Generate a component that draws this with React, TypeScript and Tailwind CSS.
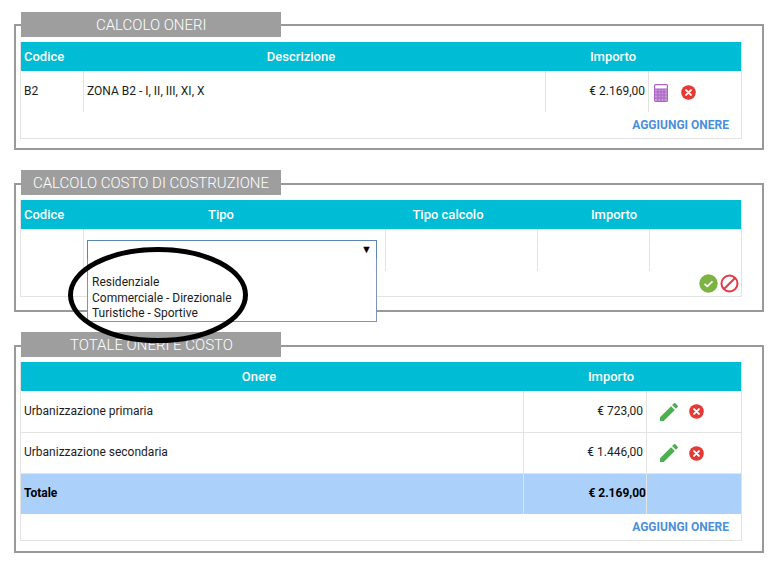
import { MdEdit } from "react-icons/md";

const CloseIcon = () => (
    <svg width="15" height="15" viewBox="0 0 16 16">
        <circle cx="8" cy="8" r="7.8" fill="#e53935" />
        <path d="M5.4 5.4l5.2 5.2M10.6 5.4l-5.2 5.2" stroke="#fff" strokeWidth="2" strokeLinecap="round" />
    </svg>
);

const CalcIcon = () => (
    <svg width="14" height="18" viewBox="0 0 14 18">
        <rect x="0.6" y="0.6" width="12.8" height="16.8" rx="1" fill="#fff" stroke="#ab63c7" strokeWidth="1.2" />
        <rect x="1" y="5" width="12" height="12" fill="#c79ad9" />
        <path d="M1 5h12M1 8h12M1 11h12M1 14h12M4 5v12M7 5v12M10 5v12" stroke="#ab63c7" strokeWidth="1.1" />
    </svg>
);

const CheckIcon = () => (
    <svg width="19" height="19" viewBox="0 0 19 19">
        <circle cx="9.5" cy="9.5" r="9.2" fill="#7cb342" />
        <path d="M5.5 9.8l2.8 2.6 5.2-5" fill="none" stroke="#fff" strokeWidth="1.6" />
    </svg>
);

const BanIcon = () => (
    <svg width="19" height="19" viewBox="0 0 19 19">
        <circle cx="9.5" cy="9.5" r="8" fill="none" stroke="#e53945" strokeWidth="2" />
        <path d="M15 4L4 15" stroke="#e53945" strokeWidth="2" />
    </svg>
);

const Legend = ({ title, className }: { title: string; className: string }) => (
    <div className={`ml-[5px] flex h-[25px] w-[260px] items-center bg-[#9e9e9e] pt-[1px] text-[15px] font-light text-white ${className}`}>
        {title}
    </div>
);

const Section = ({ children, className }: { children: React.ReactNode; className: string }) => (
    <section className={`ml-[14px] w-[750px] border-2 border-[#999] bg-white ${className}`}>{children}</section>
);

const Head = ({ children, className = "justify-center" }: { children?: React.ReactNode; className?: string }) => (
    <div className={`flex items-center text-[13px] font-medium text-white ${className}`}>{children}</div>
);

const Cell = ({ children, className = "" }: { children?: React.ReactNode; className?: string }) => (
    <div className={`flex items-center border-r border-[#e3e3e3] text-[12px] text-[#1c1c1c] ${className}`}>{children}</div>
);

const AddLink = () => (
    <div className="flex h-[26px] items-center justify-end pr-[12px] text-[12px] font-bold text-[#4a8fdc]">AGGIUNGI ONERE</div>
);

const App = () => {
    return (
        <div className="h-[565px] w-[779px] overflow-hidden bg-white pt-[24px] font-['Roboto',sans-serif]">
            <Section className="h-[126px]">
                <Legend title="CALCOLO ONERI" className="-mt-[14px] pl-[75px]" />
                <div className="mt-[5px] ml-[4px] w-[722px] border-x border-b border-[#e3e3e3]">
                    <div className="grid h-[29px] grid-cols-[50px_460px_164px_1fr] bg-[#00bcd4]">
                        <Head className="pl-[3px]">Codice</Head>
                        <Head>Descrizione</Head>
                        <Head>Importo</Head>
                        <Head />
                    </div>
                    <div className="grid h-[41px] grid-cols-[63px_462px_103px_1fr]">
                        <Cell className="pb-[2px] pl-[3px]">B2</Cell>
                        <Cell className="pb-[2px] pl-[3px]">ZONA B2 - I, II, III, XI, X</Cell>
                        <Cell className="justify-end pr-[3px] pb-[2px]">€ 2.169,00</Cell>
                        <div className="flex items-center gap-[13px] pl-[5px] pt-[2px]">
                            <CalcIcon />
                            <CloseIcon />
                        </div>
                    </div>
                    <AddLink />
                </div>
            </Section>

            <Section className="relative mt-[33px] h-[129px]">
                <Legend title="CALCOLO COSTO DI COSTRUZIONE" className="-mt-[15px] pl-[12px]" />
                <div className="mt-[5px] ml-[4px] w-[722px] border-x border-b border-[#e3e3e3]">
                    <div className="grid h-[29px] grid-cols-[50px_300px_154px_178px_1fr] bg-[#00bcd4]">
                        <Head className="pl-[3px]">Codice</Head>
                        <Head>Tipo</Head>
                        <Head>Tipo calcolo</Head>
                        <Head>Importo</Head>
                        <Head />
                    </div>
                    <div className="grid h-[42px] grid-cols-[63px_302px_152px_112px_1fr]">
                        <Cell />
                        <Cell className="pl-[3px]">
                            <div className="flex h-[20px] w-[290px] items-center justify-end border border-[#5b84b8] pr-[4px] text-[11px] text-black">▼</div>
                        </Cell>
                        <Cell />
                        <Cell />
                        <div />
                    </div>
                    <div className="flex h-[25px] items-center justify-end gap-[2px] pr-[2px]">
                        <CheckIcon />
                        <BanIcon />
                    </div>
                </div>
                {/* open dropdown of the select */}
                <div className="absolute top-[74px] left-[71px] h-[63px] w-[290px] border-x border-b border-[#7d92bd] bg-white pt-[16px] pl-[4px] text-[12px] leading-[15.5px] text-[#1c1c1c]">
                    <div>Residenziale</div>
                    <div>Commerciale - Direzionale</div>
                    <div>Turistiche - Sportive</div>
                </div>
            </Section>

            <Section className="mt-[33px] h-[208px]">
                <Legend title="TOTALE ONERI E COSTO" className="-mt-[15px] pl-[49px]" />
                <div className="mt-[5px] ml-[4px] w-[722px] border-x border-b border-[#e3e3e3]">
                    <div className="grid h-[29px] grid-cols-[476px_228px_1fr] bg-[#00bcd4]">
                        <Head>Onere</Head>
                        <Head>Importo</Head>
                        <Head />
                    </div>
                    {[
                        ["Urbanizzazione primaria", "€ 723,00"],
                        ["Urbanizzazione secondaria", "€ 1.446,00"],
                    ].map(([name, amount]) => (
                        <div key={name} className="grid h-[41.5px] grid-cols-[503px_123px_1fr] border-b border-[#e3e3e3]">
                            <Cell className="pb-[1px] pl-[3px]">{name}</Cell>
                            <Cell className="justify-end pr-[3px] pb-[1px]">{amount}</Cell>
                            <div className="flex items-center gap-[8px] pl-[10px] pt-[1px]">
                                <MdEdit className="text-[24px] text-[#4caf50]" />
                                <CloseIcon />
                            </div>
                        </div>
                    ))}
                    <div className="grid h-[40px] grid-cols-[503px_123px_1fr] bg-[#abd1fb]">
                        <Cell className="border-[#d5e6fb] pb-[2px] pl-[3px] font-bold text-black">Totale</Cell>
                        <Cell className="justify-end border-[#d5e6fb] pb-[2px] font-bold text-black">€ 2.169,00</Cell>
                        <div />
                    </div>
                    <AddLink />
                </div>
            </Section>

            {/* hand drawn oval over the screenshot */}
            <svg className="pointer-events-none absolute top-[247px] left-[68px]" width="180" height="96" viewBox="0 0 180 96">
                <ellipse cx="90" cy="48" rx="87.5" ry="45.5" fill="none" stroke="#000" strokeWidth="5" />
            </svg>
        </div>
    );
};

export default App;
